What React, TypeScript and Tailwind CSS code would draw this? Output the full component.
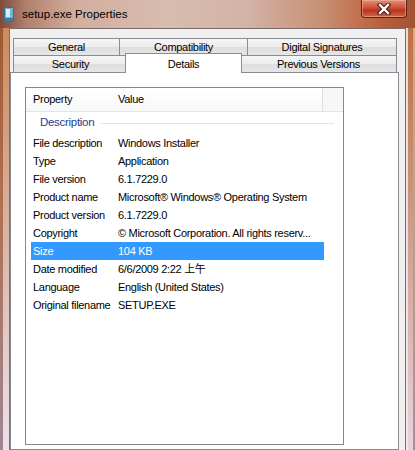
const rows: [string, string][] = [
  ['File description', 'Windows Installer'],
  ['Type', 'Application'],
  ['File version', '6.1.7229.0'],
  ['Product name', 'Microsoft® Windows® Operating System'],
  ['Product version', '6.1.7229.0'],
  ['Copyright', '© Microsoft Corporation. All rights reserv...'],
  ['Size', '104 KB'],
  ['Date modified', '6/6/2009 2:22 上午'],
  ['Language', 'English (United States)'],
  ['Original filename', 'SETUP.EXE'],
];

const tabBack =
  'h-[17px] flex items-center justify-center border border-b-0 border-[#898c95] bg-[linear-gradient(to_bottom,#f6f6f6_0%,#ececec_50%,#dedede_51%,#e6e6e6_100%)]';

function TitleIcon() {
  return (
    <svg width="10" height="15" viewBox="0 0 10 15">
      <rect x="0.5" y="0.5" width="9" height="14" rx="1" fill="#6fb6d8" stroke="#2f6f98" />
      <rect x="2" y="2" width="4" height="8" fill="#d8f0fa" />
      <rect x="1" y="11" width="8" height="3" fill="#3a7ea8" />
    </svg>
  );
}

function CloseButton() {
  return (
    <div className="w-[46px] h-[18px] rounded-b-[4px] border border-t-0 border-[#5c2418] bg-[linear-gradient(to_bottom,#e0907a_0%,#cf5238_45%,#b8341c_60%,#d2644a_100%)] flex items-center justify-center shadow-[inset_0_0_0_1px_rgba(255,200,180,0.45)]">
      <svg width="14" height="12" viewBox="0 0 14 12">
        <path d="M3 2 L11 10 M11 2 L3 10" stroke="#4a1a12" strokeWidth="4.5" strokeLinecap="square" />
        <path d="M3 2 L11 10 M11 2 L3 10" stroke="#ffffff" strokeWidth="2.4" strokeLinecap="square" />
      </svg>
    </div>
  );
}

export default function App() {
  return (
    <div className="w-[415px] h-[450px] overflow-hidden flex flex-col text-[11px] tracking-[-0.3px] text-black font-['Liberation_Sans','Noto_Sans_CJK_SC',sans-serif]">
      {/* title bar */}
      <div className="h-[28px] flex items-start bg-[linear-gradient(to_right,#7e4a3a_0%,#b07e6c_6%,#d2ae9e_18%,#d8bcb0_40%,#d2b2a6_60%,#c88e72_78%,#bc5e38_92%,#a05236_100%)]">
        <div className="ml-[4px] mt-[7px]">
          <TitleIcon />
        </div>
        <span className="ml-[8px] mt-[7px] text-[11.5px] leading-[14px] tracking-normal">setup.exe Properties</span>
        <div className="ml-auto mr-[8px]">
          <CloseButton />
        </div>
      </div>

      <div className="flex flex-1 min-h-0">
        {/* left frame */}
        <div className="w-[9px] flex">
          <div className="w-[3px] bg-[linear-gradient(to_bottom,#a05834_0%,#b07050_40%,#a08494_100%)]" />
          <div className="flex-1 bg-[linear-gradient(to_bottom,#cc8a5c_0%,#d8ac94_40%,#ece2e8_100%)]" />
        </div>

        {/* client area */}
        <div className="w-[397px] flex flex-col bg-[#f0f0f0] border-t border-x border-[#7a6c6c]">
          <div className="pt-[9px] pl-[3px]">
            <div className="flex">
              <div className={`${tabBack} w-[107px]`}>General</div>
              <div className={`${tabBack} w-[129px] -ml-px`}>Compatibility</div>
              <div className={`${tabBack} w-[150px] -ml-px`}>Digital Signatures</div>
            </div>
            <div className="flex h-[17px]">
              <div className={`${tabBack} w-[115px]`}>Security</div>
              <div className="relative z-10 -ml-[3px] -mt-[2px] w-[117px] h-[20px] bg-white border border-b-0 border-[#898c95] flex justify-center pt-[2px]">
                Details
              </div>
              <div className={`${tabBack} w-[157px] -ml-[2px]`}>Previous Versions</div>
            </div>
          </div>

          {/* tab panel */}
          <div className="flex-1 w-[389px] bg-white border border-[#898c95]">
            <div className="ml-[14px] mt-[14px] w-[319px] h-[358px] border border-[#828790] flex flex-col">
              <div className="h-[24px] flex border-b border-[#e2e4e8] bg-[linear-gradient(to_bottom,#ffffff,#f7f8f9)]">
                <div className="w-[87px] pl-[7px] flex items-center">Property</div>
                <div className="w-[210px] pl-[5px] flex items-center border-r border-[#dcdfe4]">Value</div>
                <div className="flex-1 bg-[#f7f7f7]" />
              </div>

              <div className="h-[22px] flex items-center pl-[14px]">
                <span className="text-[#1e3c8c] text-[11.5px]">Description</span>
                <div className="flex-1 h-px ml-[6px] mr-[9px] bg-[#e4e4e4]" />
              </div>

              {rows.map(([label, value]) => {
                const selected = label === 'Size';
                return (
                  <div
                    key={label}
                    className={`ml-[5px] w-[293px] h-[18px] flex items-center ${selected ? 'bg-[#3399ff] text-white' : ''}`}
                  >
                    <span className="w-[87px] pl-[2px] shrink-0">{label}</span>
                    <span className="whitespace-nowrap">{value}</span>
                  </div>
                );
              })}
            </div>
          </div>
        </div>

        {/* right frame */}
        <div className="flex-1 flex">
          <div className="flex-1 bg-[linear-gradient(to_bottom,#e8dcd8_0%,#f0e6ea_100%)]" />
          <div className="w-[5px] bg-[linear-gradient(to_bottom,#c07044_0%,#c8967e_40%,#ecd2de_100%)]" />
          <div className="w-[2px] bg-[linear-gradient(to_bottom,#d8a884_0%,#a88e9a_100%)]" />
        </div>
      </div>
    </div>
  );
}
